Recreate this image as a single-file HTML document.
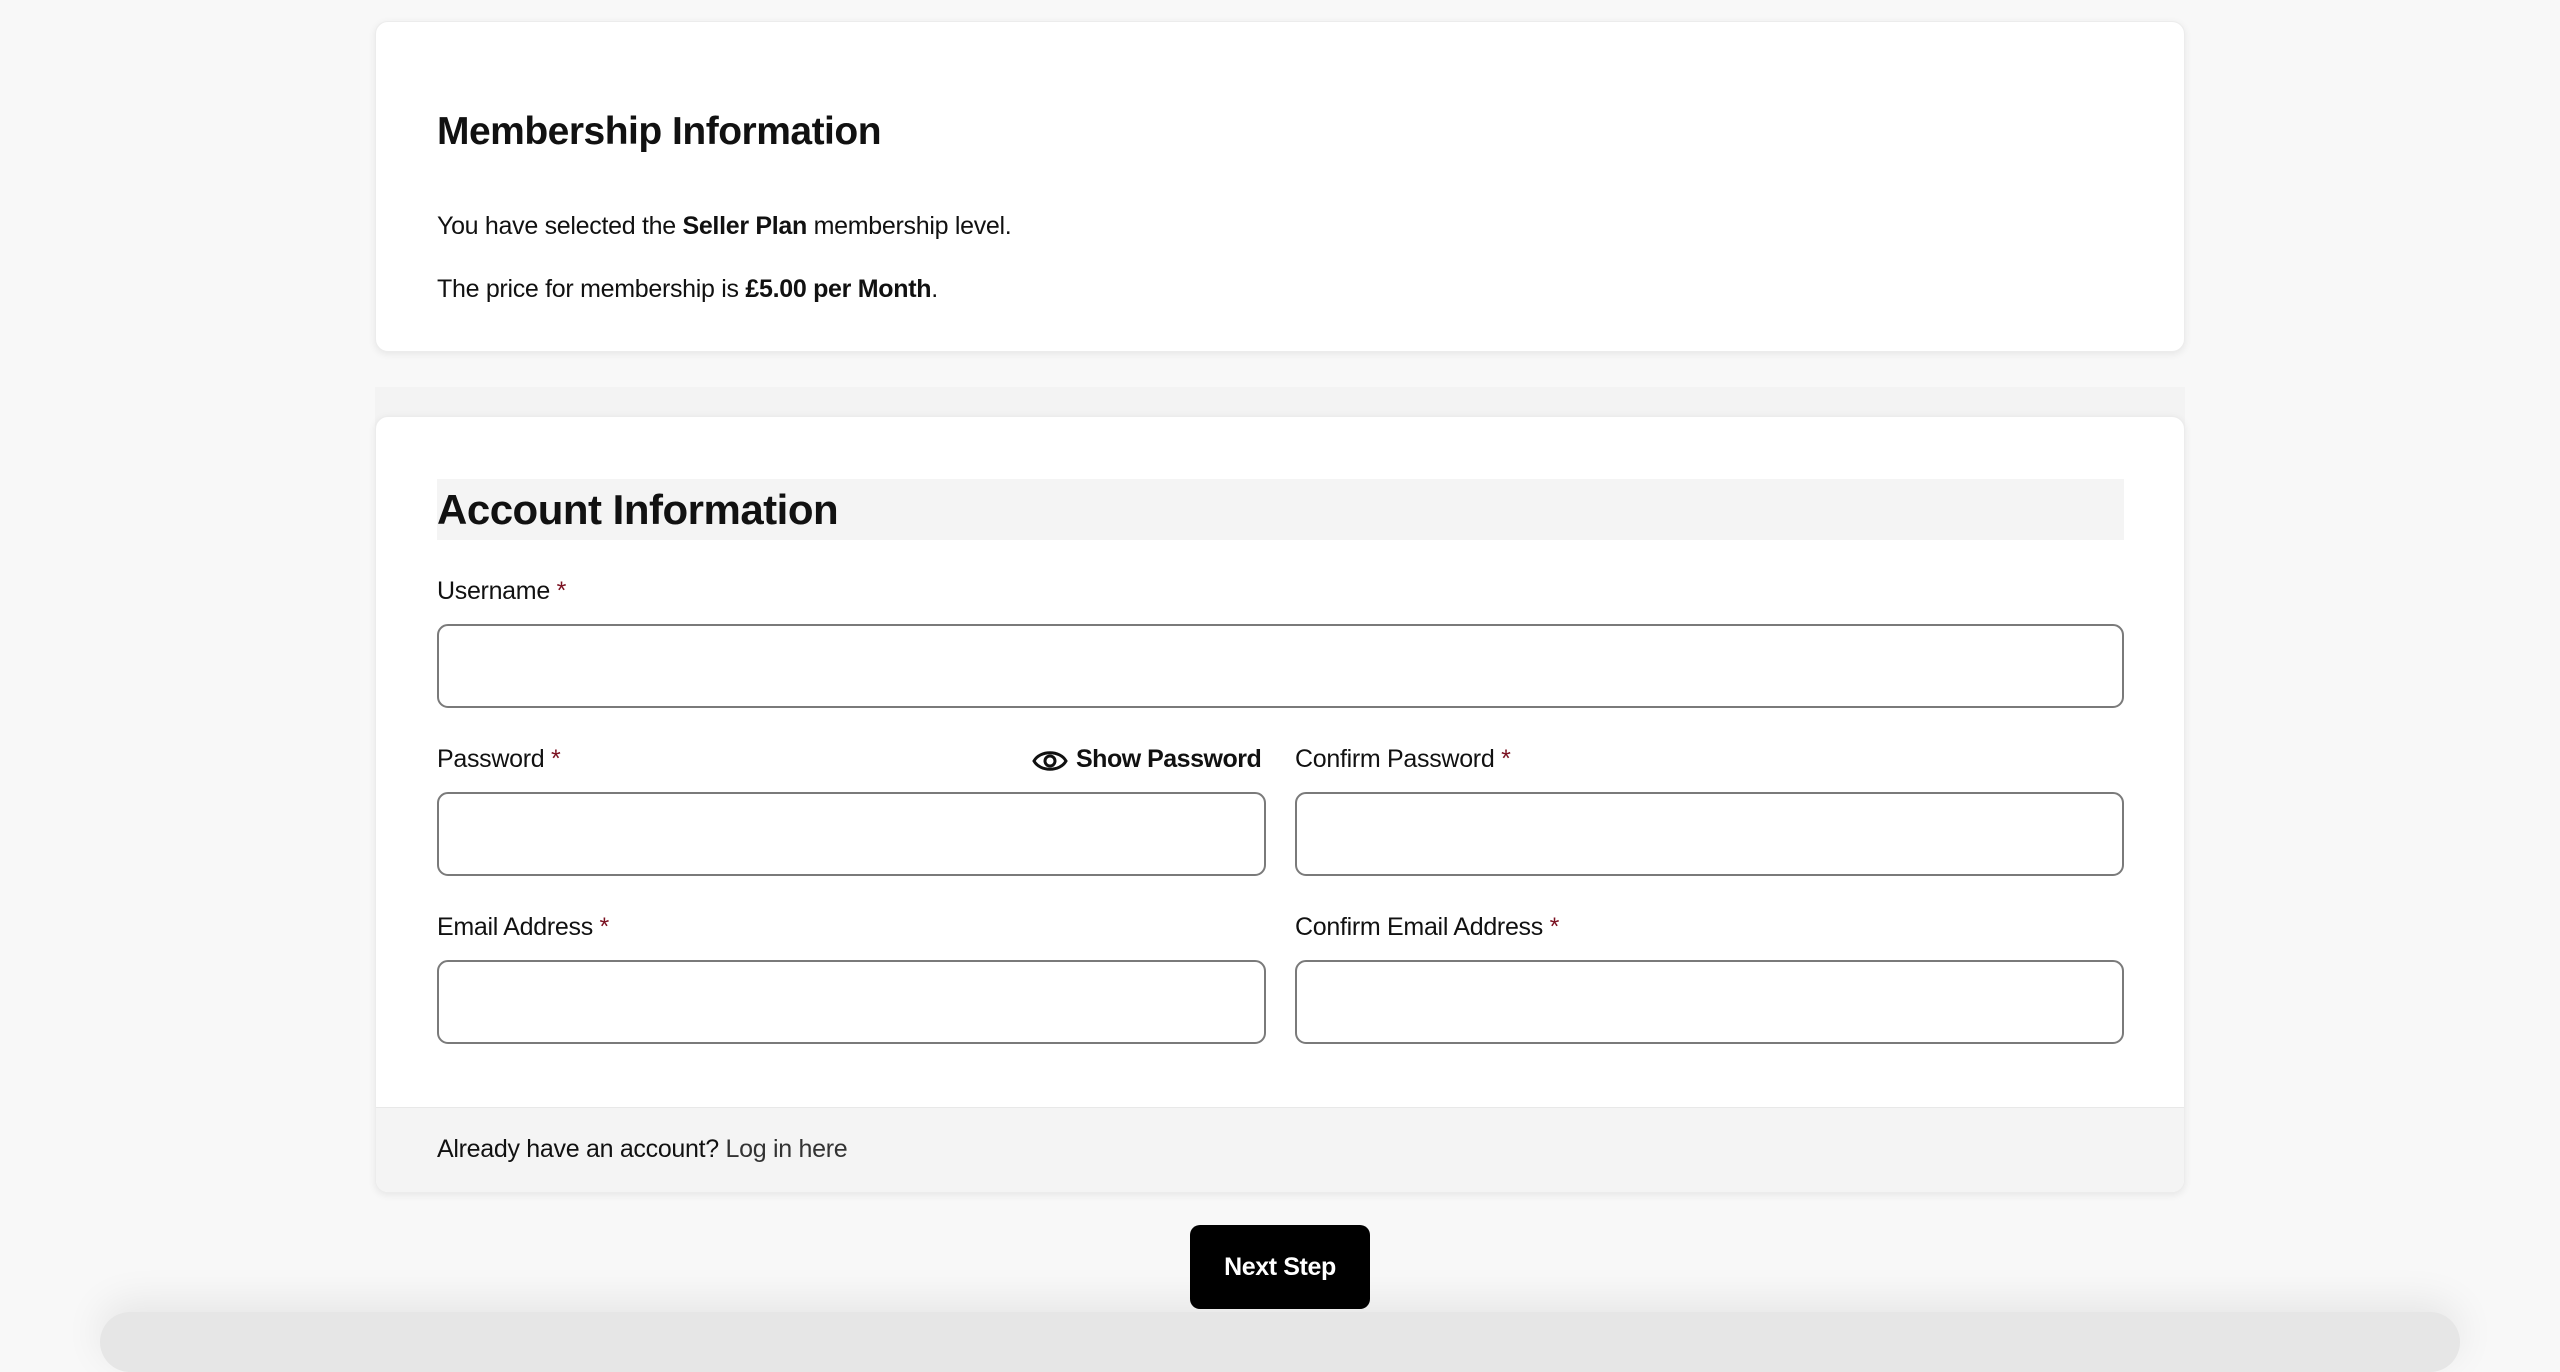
<!DOCTYPE html>
<html><head><meta charset="utf-8"><style>
*{box-sizing:border-box;margin:0;padding:0}
html,body{width:2560px;height:1319px;overflow:hidden;background:#f8f8f8;font-family:"Liberation Sans",sans-serif;color:#111}
.card{position:absolute;left:375px;width:1810px;background:#fff;border-radius:13px;box-shadow:0 2px 8px rgba(0,0,0,.08);border:1px solid #ececec}
h2{position:absolute;font-weight:bold;letter-spacing:-0.5px}
p{position:absolute;left:61px;font-size:25px;letter-spacing:-0.3px}
.lbl{position:absolute;font-size:25px;letter-spacing:-0.3px}
.req{color:#7a1020}
.inp{position:absolute;height:84px;border:2px solid #7a7a7a;border-radius:11px;background:#fff}
</style></head><body>
<div class="card" style="top:21px;height:331px">
 <h2 style="left:61px;top:88px;font-size:39px">Membership Information</h2>
 <p style="top:190px">You have selected the <b>Seller Plan</b> membership level.</p>
 <p style="top:253px">The price for membership is <b>£5.00 per Month</b>.</p>
</div>
<div style="position:absolute;left:375px;top:387px;width:1810px;height:40px;background:#f3f3f3"></div>
<div class="card" style="top:416px;height:777px;overflow:hidden">
 <div style="position:absolute;left:61px;top:62px;width:1687px;height:61px;background:#f4f4f4"></div>
 <h2 style="left:61px;top:69px;font-size:42px">Account Information</h2>
 <div class="lbl" style="left:61px;top:160px">Username <span class="req">*</span></div>
 <div class="inp" style="left:61px;top:207px;width:1687px"></div>
 <div class="lbl" style="left:61px;top:328px">Password <span class="req">*</span></div>
 <svg style="position:absolute;left:656px;top:331px" width="36" height="26" viewBox="0 0 36 26"><path d="M2 13 C8 2,28 2,34 13 C28 24,8 24,2 13Z" fill="none" stroke="#111" stroke-width="3"/><circle cx="18" cy="13" r="5" fill="none" stroke="#111" stroke-width="3"/></svg>
 <div class="lbl" style="left:700px;top:328px;font-weight:bold;width:188px;letter-spacing:-0.5px">Show Password</div>
 <div class="lbl" style="left:919px;top:328px">Confirm Password <span class="req">*</span></div>
 <div class="inp" style="left:61px;top:375px;width:829px"></div>
 <div class="inp" style="left:919px;top:375px;width:829px"></div>
 <div class="lbl" style="left:61px;top:496px">Email Address <span class="req">*</span></div>
 <div class="lbl" style="left:919px;top:496px">Confirm Email Address <span class="req">*</span></div>
 <div class="inp" style="left:61px;top:543px;width:829px"></div>
 <div class="inp" style="left:919px;top:543px;width:829px"></div>
 <div style="position:absolute;left:0;top:690px;width:1810px;height:90px;background:#f4f4f4;border-top:1px solid #e8e8e8"></div>
 <div class="lbl" style="left:61px;top:718px">Already have an account? <span style="color:#333">Log in here</span></div>
</div>
<div style="position:absolute;left:100px;top:1312px;width:2360px;height:60px;border-radius:60px;background:#e6e6e6;box-shadow:0 -10px 40px rgba(0,0,0,.08)"></div>
<div style="position:absolute;left:1190px;top:1225px;width:180px;height:84px;background:#000;border-radius:10px;color:#fff;font-weight:bold;font-size:25px;text-align:center;line-height:84px;letter-spacing:-0.4px">Next Step</div>
</body></html>
